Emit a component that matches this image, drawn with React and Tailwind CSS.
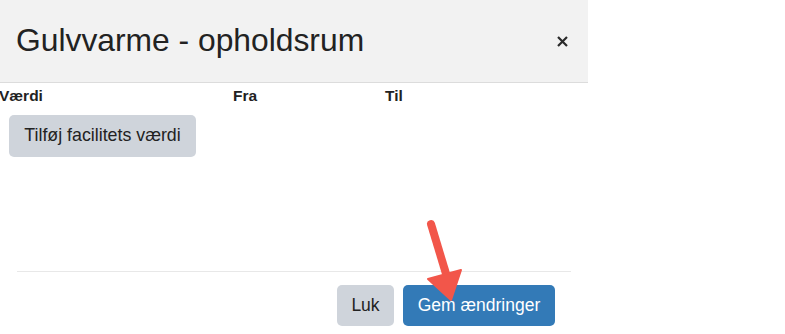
import React from 'react';

const App = () => {
  return (
    <div
      className="relative w-[785px] h-[334px] bg-white overflow-hidden text-[#222]"
      style={{ fontFamily: '"Liberation Sans", Arial, sans-serif' }}
    >
      <div className="w-[588px] h-full flex flex-col">
        {/* Header */}
        <div className="h-[83px] shrink-0 bg-[#f2f2f2] border-b border-[#dcdcdc] flex items-center justify-between pl-[16px] pr-[20px]">
          <h3 className="text-[31.8px] leading-none text-[#222]">Gulvvarme - opholdsrum</h3>
          <button className="w-[11px] h-[11px] flex items-center justify-center">
            <svg width="11" height="11" viewBox="0 0 11 11">
              <path d="M1 1L10 10M10 1L1 10" stroke="#2a2a2a" strokeWidth="2.2" />
            </svg>
          </button>
        </div>

        {/* Body */}
        <div className="flex text-[15.5px] font-bold leading-none pt-[5px]">
          <div className="w-[234px] -ml-[1px]">Værdi</div>
          <div className="w-[152px]">Fra</div>
          <div>Til</div>
        </div>
        <div className="pl-[9px] pt-[11px]">
          <button className="h-[42px] w-[187px] rounded-[5px] bg-[#cfd4db] text-[17.8px] text-[#222]">
            Tilføj facilitets værdi
          </button>
        </div>

        <div className="flex-1" />

        {/* Footer */}
        <div className="mx-[17px] border-t border-[#e8e8e8] flex justify-end gap-[9px] pt-[13px] pb-[8px] pr-[16px]">
          <button className="h-[41px] w-[57px] rounded-[5px] bg-[#cfd4db] text-[17.5px] text-[#222]">Luk</button>
          <button className="h-[41px] w-[152px] rounded-[5px] bg-[#337ab7] text-[17.5px] text-white">Gem ændringer</button>
        </div>
      </div>

      {/* annotation arrow */}
      <svg className="absolute left-[415px] top-[215px]" width="60" height="90" viewBox="0 0 60 90">
        <line x1="16" y1="9" x2="32" y2="62" stroke="#f2564a" strokeWidth="8" strokeLinecap="round" />
        <polygon points="13,64 46,55 36,85" fill="#f2564a" strokeLinejoin="round" stroke="#f2564a" strokeWidth="2" />
      </svg>
    </div>
  );
};

export default App;
